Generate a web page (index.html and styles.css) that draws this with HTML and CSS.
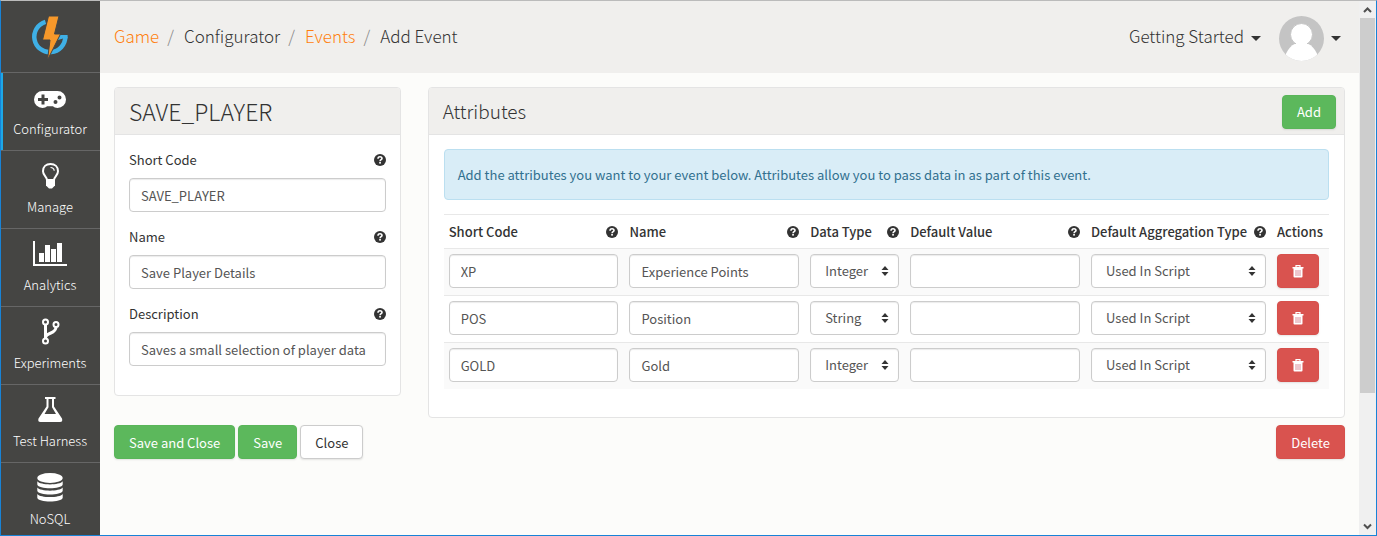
FILE: index.html
```html
<!DOCTYPE html>
<html lang="en">
<head>
<meta charset="utf-8">
<title>Add Event</title>
<link rel="stylesheet" href="styles.css">
</head>
<body>
<svg class="sprite" aria-hidden="true">
  <symbol id="help" viewBox="0 0 12 12">
    <circle cx="6" cy="6" r="6" fill="#333"/>
    <path d="M4 4.700C4 3.300 4.900 2.700 6 2.700s2 .7 2 1.700c0 1.300-1.900 1.300-1.900 2.800" fill="none" stroke="#fff" stroke-width="1.600"/>
    <rect x="5.200" y="8" width="1.700" height="1.600" fill="#fff"/>
  </symbol>
  <symbol id="sort" viewBox="0 0 8 10">
    <path d="M4 0l3.500 4h-7zM4 10l3.500-4h-7z" fill="#333"/>
  </symbol>
  <symbol id="trash" viewBox="0 0 12 13">
    <path d="M4 2V.7h4V2" fill="none" stroke="#fff" stroke-width="1.200"/>
    <path d="M.5 2h11v1.500h-11z" fill="#fff"/>
    <path d="M1.500 3h9v8.500q0 1-1 1h-7q-1 0-1-1z" fill="#fff"/>
    <path d="M4 5v6M6 5v6M8 5v6" stroke="#dc8f9c" stroke-width="1"/>
  </symbol>
</svg>
<div class="app">
  <nav class="sidebar">
    <a class="logo" href="#" aria-label="Home">
      <svg width="38" height="46" viewBox="0 0 38 46">
        <path d="M14.500 6.800A15.500 15.500 0 1 0 34.300 21.800" fill="none" stroke="#3fb0e6" stroke-width="4.500"/>
        <path d="M27 20h9.600v3.500h-4.600L27 25z" fill="#3fb0e6"/>
        <path d="M17.500 1h10.500l-4.500 18h6L16.500 45l2.500-20h-7.500z" fill="#f7982a" stroke="#454543" stroke-width="1"/>
      </svg>
    </a>
    <a class="item active" href="#">
      <svg width="32" height="32" viewBox="0 0 32 32">
        <path fill="#fff" fill-rule="evenodd" d="M8.500 8h15a8.500 8.500 0 0 1 0 17c-2 0-3.300-.6-4.500-1.700h-6C11.800 24.400 10.500 25 8.500 25a8.500 8.500 0 0 1 0-17zM7.500 11.500v3.500H4v3h3.500v3.500h3V18H14v-3h-3.500v-3.500zM21.500 17a2 2 0 1 0 0 4 2 2 0 0 0 0-4zM25.500 12.500a2 2 0 1 0 0 4 2 2 0 0 0 0-4z"/>
      </svg>
      <span>Configurator</span>
    </a>
    <a class="item" href="#">
      <svg width="32" height="32" viewBox="0 0 32 32">
        <path d="M13 19c0-3-4-4.500-4-8.800C9 6 12 3 16.500 3S24 6 24 10.200c0 4.300-4 5.800-4 8.800z" fill="none" stroke="#fff" stroke-width="2"/>
        <path d="M16.500 6.500c2.200 0 3.500 1.200 3.700 3.200" fill="none" stroke="#fff" stroke-width="1.200"/>
        <path d="M12 18.500h9v6l-1.500 1.500-1.500 1.500h-3L13.500 26 12 24.500z" fill="#fff"/>
      </svg>
      <span>Manage</span>
    </a>
    <a class="item" href="#">
      <svg width="34" height="32" viewBox="0 0 34 32">
        <path d="M0 2h2v23h32v2H0zM6 14h5v9H6zM12 6h5v17h-5zM18 10h5v13h-5zM24 4h5v19h-5z" fill="#fff"/>
      </svg>
      <span>Analytics</span>
    </a>
    <a class="item" href="#">
      <svg width="32" height="32" viewBox="0 0 32 32" fill="none" stroke="#fff">
        <circle cx="11.500" cy="5" r="2.500" stroke-width="2"/>
        <circle cx="11.500" cy="24" r="2.500" stroke-width="2"/>
        <circle cx="22" cy="7.500" r="2.500" stroke-width="2"/>
        <path d="M11.500 7.500v14M22 10c0 7.500-10.500 5-10.500 11" stroke-width="3"/>
      </svg>
      <span>Experiments</span>
    </a>
    <a class="item" href="#">
      <svg width="32" height="32" viewBox="0 0 32 32">
        <path fill="#fff" fill-rule="evenodd" d="M11 2h10.500v2H20v7.500l8 12q1 3.500-2 3.500H6.500q-3 0-2-3.500l8-12V4H11zM14.500 4v8.200L10.500 19H22l-4-6.800V4z"/>
      </svg>
      <span>Test Harness</span>
    </a>
    <a class="item" href="#">
      <svg width="32" height="32" viewBox="0 0 32 32" fill="#fff">
        <ellipse cx="16" cy="5" rx="12.700" ry="5"/>
        <path d="M3.300 8.300c3 4.200 22.400 4.200 25.400 0v3.200c-1 5-24.400 5-25.400 0z"/>
        <path d="M3.300 14.600c3 4.200 22.400 4.200 25.400 0v3.200c-1 5-24.400 5-25.400 0z"/>
        <path d="M3.300 20.900c3 4.200 22.400 4.200 25.400 0v3.800c-1 5-24.400 5-25.400 0z"/>
      </svg>
      <span>NoSQL</span>
    </a>
  </nav>

  <div class="page">
    <header class="topbar">
      <nav class="crumbs">
        <a href="#">Game</a><i>/</i><span>Configurator</span><i>/</i><a href="#">Events</a><i>/</i><span>Add Event</span>
      </nav>
      <div class="account">
        <button class="menu" type="button"><span>Getting Started</span> <b class="caret"></b></button>
        <button class="menu" type="button" aria-label="Account">
          <svg width="45" height="45" viewBox="0 0 45 45">
            <defs><clipPath id="round"><circle cx="22.500" cy="22.500" r="22.500"/></clipPath></defs>
            <g clip-path="url(#round)">
              <path d="M0 0h45v45H0z" fill="#c4c4c4"/>
              <ellipse cx="22.500" cy="44" rx="16.500" ry="17.500" fill="#fff"/>
              <circle cx="22.500" cy="18.500" r="11" fill="#fff" stroke="#c4c4c4" stroke-width="1"/>
              <path d="M17 25h11v6H17z" fill="#fff"/>
            </g>
          </svg>
          <b class="caret"></b>
        </button>
      </div>
    </header>

    <main class="content">
      <div class="columns">
        <section class="panel">
          <div class="panel-head"><h1>SAVE_PLAYER</h1></div>
          <div class="panel-body">
            <div class="field">
              <label for="code">Short Code <svg class="help"><use href="#help"/></svg></label>
              <input class="control" id="code" type="text" value="SAVE_PLAYER">
            </div>
            <div class="field">
              <label for="name">Name <svg class="help"><use href="#help"/></svg></label>
              <input class="control" id="name" type="text" value="Save Player Details">
            </div>
            <div class="field">
              <label for="desc">Description <svg class="help"><use href="#help"/></svg></label>
              <input class="control" id="desc" type="text" value="Saves a small selection of player data">
            </div>
          </div>
        </section>

        <section class="panel">
          <div class="panel-head"><h2>Attributes</h2><button class="btn green" type="button">Add</button></div>
          <div class="panel-body attributes">
            <p class="notice">Add the attributes you want to your event below. Attributes allow you to pass data in as part of this event.</p>
            <table>
              <colgroup><col><col><col class="c-type"><col><col class="c-agg"><col class="c-act"></colgroup>
              <thead>
                <tr>
                  <th><div class="th">Short Code <svg class="help"><use href="#help"/></svg></div></th>
                  <th><div class="th">Name <svg class="help"><use href="#help"/></svg></div></th>
                  <th><div class="th">Data Type <svg class="help"><use href="#help"/></svg></div></th>
                  <th><div class="th">Default Value <svg class="help"><use href="#help"/></svg></div></th>
                  <th><div class="th">Default Aggregation Type <svg class="help"><use href="#help"/></svg></div></th>
                  <th><div class="th">Actions</div></th>
                </tr>
              </thead>
              <tbody>
                <tr>
                  <td><input class="control" type="text" aria-label="Short Code" value="XP"></td>
                  <td><input class="control" type="text" aria-label="Name" value="Experience Points"></td>
                  <td><div class="pick"><select class="control" aria-label="Data Type"><option>Integer</option><option>String</option></select><svg><use href="#sort"/></svg></div></td>
                  <td><input class="control" type="text" aria-label="Default Value"></td>
                  <td><div class="pick"><select class="control" aria-label="Default Aggregation Type"><option>Used In Script</option></select><svg><use href="#sort"/></svg></div></td>
                  <td><button class="btn red bin" type="button" aria-label="Delete XP"><svg width="12" height="13"><use href="#trash"/></svg></button></td>
                </tr>
                <tr>
                  <td><input class="control" type="text" aria-label="Short Code" value="POS"></td>
                  <td><input class="control" type="text" aria-label="Name" value="Position"></td>
                  <td><div class="pick"><select class="control" aria-label="Data Type"><option>Integer</option><option selected>String</option></select><svg><use href="#sort"/></svg></div></td>
                  <td><input class="control" type="text" aria-label="Default Value"></td>
                  <td><div class="pick"><select class="control" aria-label="Default Aggregation Type"><option>Used In Script</option></select><svg><use href="#sort"/></svg></div></td>
                  <td><button class="btn red bin" type="button" aria-label="Delete POS"><svg width="12" height="13"><use href="#trash"/></svg></button></td>
                </tr>
                <tr>
                  <td><input class="control" type="text" aria-label="Short Code" value="GOLD"></td>
                  <td><input class="control" type="text" aria-label="Name" value="Gold"></td>
                  <td><div class="pick"><select class="control" aria-label="Data Type"><option>Integer</option><option>String</option></select><svg><use href="#sort"/></svg></div></td>
                  <td><input class="control" type="text" aria-label="Default Value"></td>
                  <td><div class="pick"><select class="control" aria-label="Default Aggregation Type"><option>Used In Script</option></select><svg><use href="#sort"/></svg></div></td>
                  <td><button class="btn red bin" type="button" aria-label="Delete GOLD"><svg width="12" height="13"><use href="#trash"/></svg></button></td>
                </tr>
              </tbody>
            </table>
          </div>
        </section>
      </div>
      <div class="actions">
        <button class="btn green" type="button">Save and Close</button>
        <button class="btn green" type="button">Save</button>
        <button class="btn plain" type="button">Close</button>
        <button class="btn red last" type="button">Delete</button>
      </div>
    </main>
  </div>

  <div class="scrollbar" aria-hidden="true">
    <svg width="15" height="17" viewBox="0 0 15 17"><path d="M4 11l3.500-3.500L11 11" fill="none" stroke="#505050" stroke-width="2"/></svg>
    <div class="track"><div class="thumb"></div></div>
    <svg width="15" height="17" viewBox="0 0 15 17"><path d="M4 6.500L7.500 10 11 6.500" fill="none" stroke="#505050" stroke-width="2"/></svg>
  </div>
</div>
</body>
</html>
```
FILE: styles.css
```css
* { box-sizing: border-box; }

body {
  margin: 0;
  background: #fcfcfa;
  color: #333;
  font: 13px/20px "Noto Sans CJK SC", "Noto Sans", sans-serif;
}

a { text-decoration: none; }
button, input, select { font: inherit; color: inherit; margin: 0; }
svg { display: block; flex: none; }
.sprite { display: none; }

.app {
  display: flex;
  height: 100vh;
  overflow: hidden;
  border: 1px solid #1883d7;
  border-top-color: #bbb;
}

/* Sidebar */
.sidebar {
  flex: none;
  width: 99px;
  background: #454543;
  overflow: hidden;
}
.logo {
  display: flex;
  justify-content: center;
  height: 71px;
  padding: 14px 1px 0 0;
}
.item {
  display: flex;
  flex-direction: column;
  align-items: center;
  gap: 4px;
  height: 78px;
  padding: 10px 1px 0 0;
  border-top: 1px solid #666;
  color: #fff;
  font-family: "Noto Sans CJK SC Light", "Noto Sans CJK SC", sans-serif;
  font-weight: 300;
}
.item.active { box-shadow: inset 2px 0 #1ca8e8; }

/* Top bar */
.page { flex: 1; min-width: 0; }
.topbar {
  display: flex;
  align-items: center;
  justify-content: space-between;
  height: 72px;
  padding: 0 18px 0 14px;
  background: #f0efed;
  font-family: "Noto Sans CJK SC Light", "Noto Sans CJK SC", sans-serif;
  font-size: 17px;
  font-weight: 200;
}
.crumbs { display: flex; padding-bottom: 2px; }
.crumbs a { color: #ff7f0e; }
.crumbs i { margin: 0 10px 0 8px; color: #888; font-style: normal; }
.account { display: flex; align-items: center; gap: 18px; padding-top: 2px; }
.menu {
  display: flex;
  align-items: center;
  gap: 7px;
  padding: 0;
  border: 0;
  background: none;
}
.menu span { padding-bottom: 4px; }
.caret {
  border: 5px solid transparent;
  border-top-color: #333;
  border-bottom: 0;
}

/* Panels */
.content { padding: 14px; }
.columns {
  display: grid;
  grid-template-columns: minmax(0, 5fr) minmax(0, 16fr);
  gap: 27px;
  align-items: start;
}
.panel {
  border: 1px solid #e4e4e4;
  border-radius: 4px;
  background: #fff;
}
.panel-head {
  display: flex;
  align-items: center;
  justify-content: space-between;
  height: 47px;
  padding: 1px 8px 0 14px;
  border-bottom: 1px solid #e4e4e4;
  border-radius: 3px 3px 0 0;
  background: #f0efed;
}
h1, h2 {
  margin: 0;
  padding-bottom: 2px;
  font-family: "Noto Sans CJK SC Light", "Noto Sans CJK SC", sans-serif;
  font-weight: 200;
}
h1 { font-size: 23px; }
h2 { font-size: 19px; }
.panel-body { padding: 15px 14px 14px; }
.attributes { padding: 14px 15px 28px; }

.field { margin-bottom: 15px; }
.field label {
  display: flex;
  align-items: center;
  justify-content: space-between;
  margin-bottom: 8px;
}
.help { width: 12px; height: 12px; }
.control {
  display: block;
  width: 100%;
  height: 34px;
  padding: 0 11px;
  border: 1px solid #ccc;
  border-radius: 4px;
  background: #fff;
  box-shadow: inset 0 1px 1px rgba(0, 0, 0, 0.08);
  color: #555;
}

.notice {
  margin: 0 0 14px;
  padding: 15px 13px 14px;
  border: 1px solid #bbdff0;
  border-radius: 4px;
  background: #d9edf7;
  color: #31708f;
}

/* Attribute table */
table { width: 100%; border-collapse: collapse; table-layout: fixed; }
.c-type { width: 100px; }
.c-agg { width: 186px; }
.c-act { width: 57px; }
th, td { border-top: 1px solid #e8e8e8; text-align: left; }
th { padding: 7px 6px 6px 5px; font-weight: 500; white-space: nowrap; }
td { padding: 5px 6px 7px 5px; }
.th { display: flex; align-items: center; justify-content: space-between; }
tbody tr:nth-child(odd) { background: #fafafa; }
.pick { display: grid; align-items: center; }
.pick > * { grid-area: 1 / 1; }
.pick select { appearance: none; padding: 0 14px; }
.pick svg {
  justify-self: end;
  width: 8px;
  height: 10px;
  margin-right: 10px;
  pointer-events: none;
}

/* Buttons */
.btn {
  height: 34px;
  padding: 1px 14px 0;
  border: 1px solid transparent;
  border-radius: 4px;
  color: #fff;
  box-shadow: 0 1px 2px rgba(0, 0, 0, 0.1);
}
.green { background: #5cb85c; border-color: #59b559; }
.red { background: #d9534f; border-color: #d7504c; }
.plain { background: #fff; border-color: #ccc; color: #333; }
.bin { display: flex; align-items: center; justify-content: center; width: 42px; }
.actions { display: flex; gap: 3px; margin-top: 7px; }
.last { margin-left: auto; }

/* Scrollbar */
.scrollbar {
  display: flex;
  flex-direction: column;
  flex: none;
  width: 17px;
  padding: 0 1px;
  background: #f0f0f0;
}
.track { flex: 1; }
.thumb { height: 75%; background: #cdcdcd; }
```
